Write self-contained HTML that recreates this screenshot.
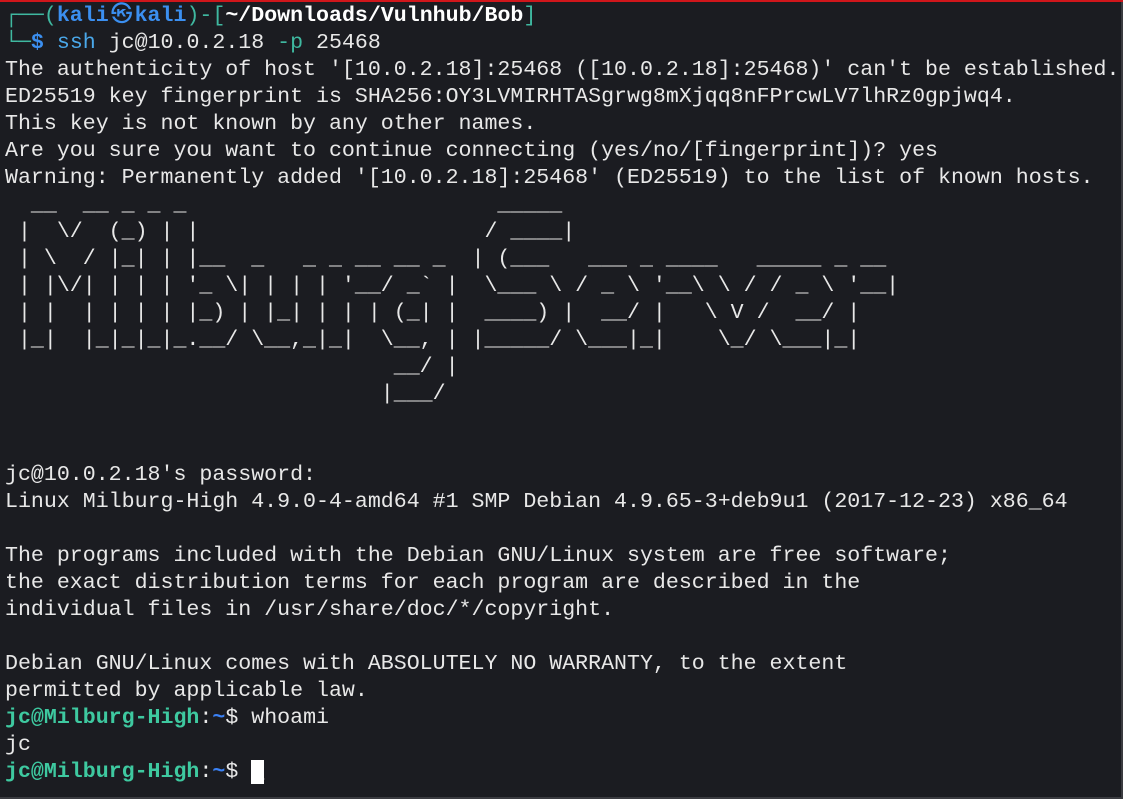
<!DOCTYPE html>
<html><head><meta charset="utf-8"><style>
html,body{margin:0;padding:0;background:#1b1c21;width:1123px;height:799px;overflow:hidden}
body{position:relative;border-top:2px solid #d0161b;box-sizing:border-box}
pre{margin:0;position:absolute;left:5px;top:1px;font-family:"Liberation Mono","DejaVu Sans Mono",monospace;font-size:21.6px;line-height:27px;color:#e8e8e8;white-space:pre}
.t{color:#3fb8a0}.b{color:#3b8ff0;font-weight:bold}.w{color:#fff;font-weight:bold}
.s{color:#4aa8ea}.g{color:#3ec9a0;font-weight:bold}.bl{color:#3b82f6;font-weight:bold}
.cur{background:#fff;color:#fff}
.sym{display:inline-block;width:1.2em;text-align:center;font-weight:normal}
.rb{position:absolute;right:0;top:0;width:2px;height:799px;background:#3a3b40}
.bb{position:absolute;left:0;bottom:0;width:1123px;height:2px;background:#3a3b40}
</style></head><body><pre><span class="t">┌──(</span><span class="b">kali<span class="sym">㉿</span>kali</span><span class="t">)-[</span><span class="w">~/Downloads/Vulnhub/Bob</span><span class="t">]</span>
<span class="t">└─</span><span class="b">$</span> <span class="s">ssh</span> jc@10.0.2.18 <span class="t">-p</span> 25468
The authenticity of host '[10.0.2.18]:25468 ([10.0.2.18]:25468)' can't be established.
ED25519 key fingerprint is SHA256:OY3LVMIRHTASgrwg8mXjqq8nFPrcwLV7lhRz0gpjwq4.
This key is not known by any other names.
Are you sure you want to continue connecting (yes/no/[fingerprint])? yes
Warning: Permanently added '[10.0.2.18]:25468' (ED25519) to the list of known hosts.
  __  __ _ _ _                        _____
 |  \/  (_) | |                      / ____|
 | \  / |_| | |__  _   _ _ __ __ _  | (___   ___ _ ____   _____ _ __
 | |\/| | | | '_ \| | | | '__/ _` |  \___ \ / _ \ '__\ \ / / _ \ '__|
 | |  | | | | |_) | |_| | | | (_| |  ____) |  __/ |   \ V /  __/ |
 |_|  |_|_|_|_.__/ \__,_|_|  \__, | |_____/ \___|_|    \_/ \___|_|
                              __/ |
                             |___/


jc@10.0.2.18's password:
Linux Milburg-High 4.9.0-4-amd64 #1 SMP Debian 4.9.65-3+deb9u1 (2017-12-23) x86_64

The programs included with the Debian GNU/Linux system are free software;
the exact distribution terms for each program are described in the
individual files in /usr/share/doc/*/copyright.

Debian GNU/Linux comes with ABSOLUTELY NO WARRANTY, to the extent
permitted by applicable law.
<span class="g">jc@Milburg-High</span>:<span class="bl">~</span>$ whoami
jc
<span class="g">jc@Milburg-High</span>:<span class="bl">~</span>$ <span class="cur">_</span></pre>
<div class="rb"></div><div class="bb"></div>
</body></html>
